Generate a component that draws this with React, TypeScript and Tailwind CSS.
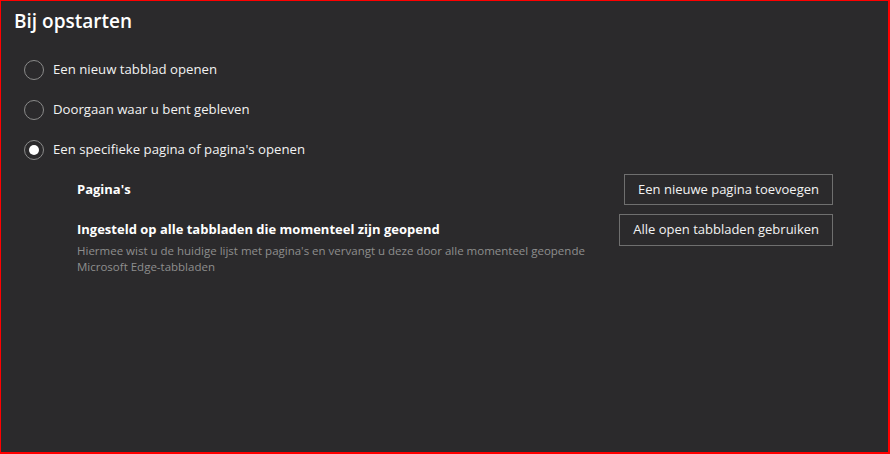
import { useState } from "react";

const options = [
  "Een nieuw tabblad openen",
  "Doorgaan waar u bent gebleven",
  "Een specifieke pagina of pagina's openen",
];

function Radio({ checked }: { checked: boolean }) {
  return (
    <span className="w-[20px] h-[20px] rounded-full border border-[#8a8a8a] flex items-center justify-center shrink-0">
      {checked && <span className="w-[10px] h-[10px] rounded-full bg-white" />}
    </span>
  );
}

export default function App() {
  const [selected, setSelected] = useState(2);

  return (
    <div
      className="w-[890px] h-[454px] bg-[#2b2a2c] border-t border-l border-r-2 border-b-2 border-[#ff0000] text-white overflow-hidden"
      style={{ fontFamily: '"Open Sans", "Noto Sans", sans-serif' }}
    >
      <h1 className="text-[19px] font-semibold leading-none pl-[13px] pt-[11px]">Bij opstarten</h1>

      <div className="mt-[29px] flex flex-col gap-[20px] pl-[23px]">
        {options.map((o, i) => (
          <button
            key={o}
            onClick={() => setSelected(i)}
            className="flex items-center gap-[9px] h-[20px] text-left"
          >
            <Radio checked={selected === i} />
            <span className="text-[13.2px] text-[#f2f2f2]">{o}</span>
          </button>
        ))}
      </div>

      <div className="ml-[76px] mr-[55px] mt-[14px] flex flex-col gap-[9px]">
        <div className="flex items-center justify-between">
          <span className="text-[13px] font-bold">Pagina's</span>
          <button className="h-[31px] px-[13px] border border-[#6f6f6f] text-[13px] text-[#f2f2f2]">
            Een nieuwe pagina toevoegen
          </button>
        </div>
        <div className="flex items-start justify-between">
          <div className="pt-[5px]">
            <div className="text-[13px] font-bold leading-[20px]">
              Ingesteld op alle tabbladen die momenteel zijn geopend
            </div>
            <p className="text-[11.5px] leading-[16px] text-[#8e8e8e] w-[520px] mt-[4px]">
              Hiermee wist u de huidige lijst met pagina's en vervangt u deze door alle momenteel geopende
              Microsoft Edge-tabbladen
            </p>
          </div>
          <button className="h-[32px] px-[13px] border border-[#6f6f6f] text-[13px] text-[#f2f2f2]">
            Alle open tabbladen gebruiken
          </button>
        </div>
      </div>
    </div>
  );
}
